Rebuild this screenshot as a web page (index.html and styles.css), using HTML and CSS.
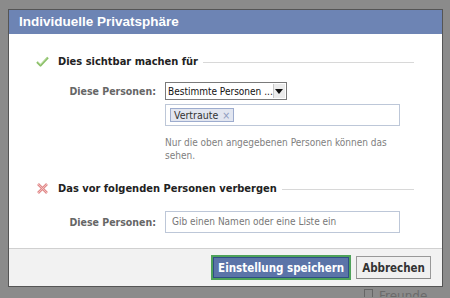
FILE: index.html
```html
<!DOCTYPE html>
<html>

<head>
	<title>Individuelle Privatsphäre</title>
	<link rel="stylesheet" href="styles.css">
</head>

<body>
	<div class="overlay">
		<div class="dialog">
			<div class="dialog-title">Individuelle Privatsphäre</div>

			<div class="dialog-body">
				<div class="section-head">
					<svg class="icon" width="13" height="11" viewBox="0 0 13 11">
						<path d="M1 6 L4.5 9.5 L12 1.5" fill="none" stroke="#8cc06a" stroke-width="2.2" stroke-linejoin="round" />
						<path d="M2 6 L4.5 8.5 L11 1.5" fill="none" stroke="#c4e2a8" stroke-width="0.8" />
					</svg>
					<span class="section-label">Dies sichtbar machen für</span>
					<span class="rule"></span>
				</div>

				<div class="form-row first">
					<label>Diese Personen:</label>
					<div class="select">
						<span class="select-text">Bestimmte Personen ...</span>
						<span class="select-arrow">
							<svg width="8" height="5" viewBox="0 0 8 5"><path d="M0 0 H8 L4 5 Z" fill="#111" /></svg>
						</span>
					</div>
				</div>

				<div class="form-row">
					<span></span>
					<div class="token-input">
						<span class="token">Vertraute <span class="token-x">×</span></span>
					</div>
				</div>

				<div class="form-row">
					<span></span>
					<p class="help">Nur die oben angegebenen Personen können das sehen.</p>
				</div>

				<div class="section-head second">
					<svg class="icon" width="13" height="11" viewBox="0 0 13 11">
						<path d="M2 1 L11 10 M11 1 L2 10" fill="none" stroke="#e08a8a" stroke-width="2.6" />
						<path d="M2 1 L11 10 M11 1 L2 10" fill="none" stroke="#f6c8c8" stroke-width="0.8" />
					</svg>
					<span class="section-label">Das vor folgenden Personen verbergen</span>
					<span class="rule"></span>
				</div>

				<div class="form-row third">
					<label>Diese Personen:</label>
					<div class="text-input">Gib einen Namen oder eine Liste ein</div>
				</div>
			</div>

			<div class="dialog-footer">
				<button class="btn btn-primary">Einstellung speichern</button>
				<button class="btn">Abbrechen</button>
			</div>
		</div>

		<div class="page-under">
			<span class="check-box"></span>
			<span>Freunde können</span>
		</div>
	</div>
</body>

</html>
```

FILE: styles.css
```css
body {
	margin: 0;
	padding: 0;
	width: 450px;
	height: 298px;
	overflow: hidden;
	background-color: #8b8b8b;
	font-family: "DejaVu Sans Condensed", "Liberation Sans", sans-serif;
	font-size: 11px;
}

.overlay {
	padding: 9px 0 0 8px;
}

.dialog {
	width: 433px;
	background-color: white;
	border: 1px solid #555;
}

.dialog-title {
	height: 24px;
	background-color: #6d84b4;
	color: white;
	font-family: "Liberation Sans", sans-serif;
	font-size: 13.5px;
	font-weight: bold;
	line-height: 24px;
	padding-left: 10px;
}

.dialog-body {
	padding: 20px 28px 15px 0;
}

.section-head {
	display: flex;
	align-items: center;
	padding-left: 27px;
	height: 14px;
}

.section-head.second {
	margin-top: 19px;
}

.icon {
	flex-shrink: 0;
}

.section-label {
	font-weight: bold;
	font-size: 11px;
	color: #222;
	margin-left: 9px;
	white-space: nowrap;
}

.rule {
	flex: 1;
	height: 1px;
	background-color: #d8d8d8;
	margin-left: 5px;
	margin-top: 2px;
}

.form-row {
	display: grid;
	grid-template-columns: 147px 1fr;
	column-gap: 9px;
	align-items: center;
	padding-right: 14px;
	margin-top: 4px;
}

.form-row.first {
	margin-top: 14px;
}

.form-row.third {
	margin-top: 16px;
}

.form-row label {
	text-align: right;
	font-weight: bold;
	color: #666;
	font-size: 10.5px;
}

.select {
	width: 120px;
	height: 16px;
	border: 1px solid #7a7a7a;
	display: flex;
	align-items: center;
	justify-content: space-between;
	color: #111;
	font-size: 10px;
}

.select-text {
	padding-left: 2px;
	white-space: nowrap;
}

.select-arrow {
	width: 15px;
	height: 14px;
	margin-right: 1px;
	background-color: #ececec;
	border-left: 1px solid #c8c8c8;
	display: flex;
	align-items: center;
	justify-content: center;
}

.token-input {
	height: 20px;
	border: 1px solid #bdc7d8;
	display: flex;
	align-items: center;
	padding-left: 4px;
}

.token {
	background-color: #e2e6f0;
	border: 1px solid #9dacce;
	padding: 0 3px;
	height: 12px;
	line-height: 12px;
	font-size: 10.5px;
	color: #333;
}

.token-x {
	color: #8d9bbf;
	margin-left: 1px;
}

.help {
	margin: 6px 0 0;
	color: #808080;
	font-size: 10px;
	line-height: 13px;
	padding-right: 8px;
}

.text-input {
	height: 20px;
	border: 1px solid #bdc7d8;
	line-height: 20px;
	padding-left: 6px;
	color: #777;
	font-size: 10px;
}

.dialog-footer {
	background-color: #f2f2f2;
	border-top: 1px solid #d0d0d0;
	height: 37px;
	display: flex;
	justify-content: flex-end;
	align-items: center;
	gap: 5px;
	padding-right: 11px;
}

.btn {
	font-family: "DejaVu Sans Condensed", sans-serif;
	font-weight: bold;
	font-size: 11.5px;
	height: 23px;
	padding: 0 5px;
	background-color: #f0f0f0;
	color: #333;
	border: 1px solid #999;
	border-bottom-color: #888;
	cursor: pointer;
}

.btn-primary {
	height: 25px;
	background-color: #5b74a8;
	color: white;
	border: 2px solid #4ea25a;
	outline: 1px solid #2f4f86;
	outline-offset: -3px;
}

.page-under {
	display: flex;
	align-items: flex-start;
	gap: 6px;
	padding-left: 356px;
	padding-top: 2px;
	height: 8px;
	overflow: hidden;
	color: #6a6a6a;
	font-size: 12px;
	line-height: 14px;
	font-family: "DejaVu Sans", sans-serif;
}

.check-box {
	flex-shrink: 0;
	width: 9px;
	height: 9px;
	border: 1px solid #666;
	box-sizing: border-box;
}
```
